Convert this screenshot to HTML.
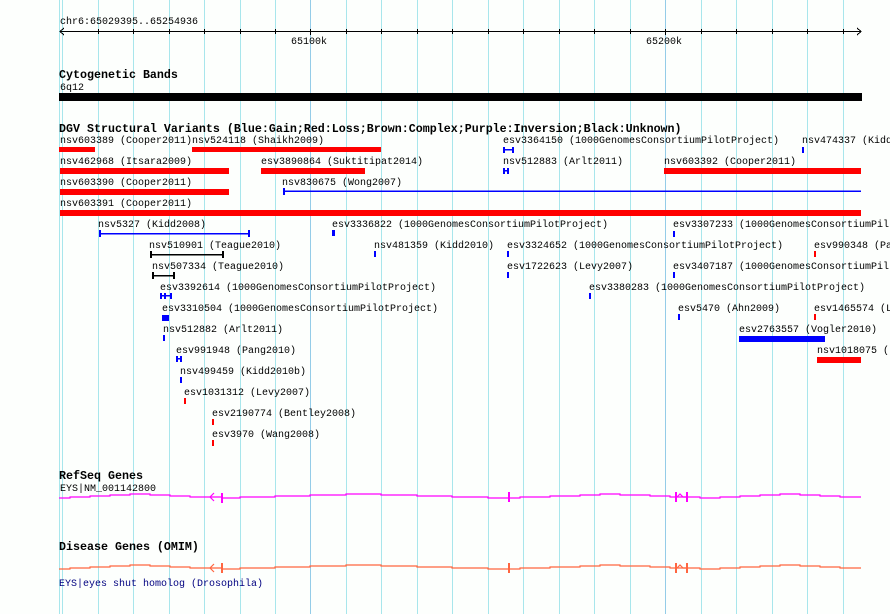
<!DOCTYPE html>
<html><head><meta charset="utf-8"><style>
html,body{margin:0;padding:0;background:#fdfffd;overflow:hidden;}
body{width:890px;height:614px;}
#w{position:absolute;left:0;top:0;width:890px;height:614px;overflow:hidden;font-family:"Liberation Mono",monospace;}
.t{position:absolute;font-size:10px;line-height:10px;white-space:nowrap;color:#000;margin-top:2px;}
.h{position:absolute;font-size:11.67px;line-height:12px;font-weight:bold;white-space:nowrap;color:#000;margin-top:1px;}
svg{position:absolute;left:0;top:0;}
</style></head><body><div id="w">
<svg width="890" height="614" xmlns="http://www.w3.org/2000/svg" shape-rendering="crispEdges">
<g stroke="#a8e6ec" stroke-width="1">
<line x1="59.5" y1="0" x2="59.5" y2="614"/><line x1="62.5" y1="0" x2="62.5" y2="614"/>
<line x1="98.5" y1="0" x2="98.5" y2="614"/><line x1="133.5" y1="0" x2="133.5" y2="614"/>
<line x1="169.5" y1="0" x2="169.5" y2="614"/><line x1="204.5" y1="0" x2="204.5" y2="614"/>
<line x1="240.5" y1="0" x2="240.5" y2="614"/><line x1="275.5" y1="0" x2="275.5" y2="614"/>
<line x1="346.5" y1="0" x2="346.5" y2="614"/><line x1="381.5" y1="0" x2="381.5" y2="614"/>
<line x1="417.5" y1="0" x2="417.5" y2="614"/><line x1="452.5" y1="0" x2="452.5" y2="614"/>
<line x1="488.5" y1="0" x2="488.5" y2="614"/><line x1="523.5" y1="0" x2="523.5" y2="614"/>
<line x1="559.5" y1="0" x2="559.5" y2="614"/><line x1="594.5" y1="0" x2="594.5" y2="614"/>
<line x1="630.5" y1="0" x2="630.5" y2="614"/><line x1="701.5" y1="0" x2="701.5" y2="614"/>
<line x1="736.5" y1="0" x2="736.5" y2="614"/><line x1="772.5" y1="0" x2="772.5" y2="614"/>
<line x1="807.5" y1="0" x2="807.5" y2="614"/><line x1="843.5" y1="0" x2="843.5" y2="614"/>
</g>
<g stroke="#94cce8"><line x1="310.5" y1="0" x2="310.5" y2="614"/><line x1="665.5" y1="0" x2="665.5" y2="614"/></g>
<g stroke="#000" stroke-width="1">
<line x1="60" y1="31.5" x2="861" y2="31.5"/>
<polyline points="64,28 60,31.5 64,35" fill="none"/>
<polyline points="857,28 861,31.5 857,35" fill="none"/>
<g>
<line x1="98.5" y1="29" x2="98.5" y2="34"/><line x1="133.5" y1="29" x2="133.5" y2="34"/><line x1="169.5" y1="29" x2="169.5" y2="34"/><line x1="204.5" y1="29" x2="204.5" y2="34"/><line x1="240.5" y1="29" x2="240.5" y2="34"/><line x1="275.5" y1="29" x2="275.5" y2="34"/><line x1="310.5" y1="29" x2="310.5" y2="35"/><line x1="346.5" y1="29" x2="346.5" y2="34"/><line x1="381.5" y1="29" x2="381.5" y2="34"/><line x1="417.5" y1="29" x2="417.5" y2="34"/><line x1="452.5" y1="29" x2="452.5" y2="34"/><line x1="488.5" y1="29" x2="488.5" y2="34"/><line x1="523.5" y1="29" x2="523.5" y2="34"/><line x1="559.5" y1="29" x2="559.5" y2="34"/><line x1="594.5" y1="29" x2="594.5" y2="34"/><line x1="630.5" y1="29" x2="630.5" y2="34"/><line x1="665.5" y1="29" x2="665.5" y2="35"/><line x1="701.5" y1="29" x2="701.5" y2="34"/><line x1="736.5" y1="29" x2="736.5" y2="34"/><line x1="772.5" y1="29" x2="772.5" y2="34"/><line x1="807.5" y1="29" x2="807.5" y2="34"/><line x1="843.5" y1="29" x2="843.5" y2="34"/>
</g></g>
<rect x="59" y="93" width="803" height="8" fill="#000"/>
<g fill="#ff0000">
<rect x="59" y="147" width="36" height="5"/><rect x="192" y="147" width="189" height="5"/>
<rect x="60" y="168" width="169" height="6"/><rect x="261" y="168" width="104" height="6"/><rect x="664" y="168" width="197" height="6"/>
<rect x="60" y="189" width="169" height="6"/>
<rect x="60" y="210" width="801" height="6"/>
<rect x="814" y="251" width="2" height="6"/>
<rect x="814" y="314" width="2" height="6"/>
<rect x="817" y="357" width="44" height="6"/>
<rect x="184" y="398" width="2" height="6"/>
<rect x="212" y="419" width="2" height="6"/>
<rect x="212" y="440" width="2" height="6"/>
</g>
<g fill="#0000ff">
<rect x="503" y="147" width="2" height="6"/><rect x="503" y="149" width="11" height="1.5"/><rect x="512" y="147" width="2" height="6"/>
<rect x="802" y="147" width="2" height="6"/>
<rect x="503" y="168" width="2" height="6"/><rect x="503" y="170" width="6" height="1.5"/><rect x="507" y="168" width="2" height="6"/>
<rect x="283" y="188" width="2" height="7"/><rect x="283" y="190.5" width="578" height="1.5"/>
<rect x="99" y="230" width="2" height="7"/><rect x="99" y="233" width="150" height="1.5"/><rect x="248" y="230" width="2" height="7"/>
<rect x="332" y="230" width="3" height="6"/>
<rect x="673" y="231" width="2" height="6"/>
<rect x="374" y="251" width="2" height="6"/>
<rect x="507" y="251" width="2" height="6"/>
<rect x="507" y="272" width="2" height="6"/>
<rect x="673" y="272" width="2" height="6"/>
<rect x="160" y="293" width="2" height="6"/><rect x="160" y="295" width="12" height="1.5"/><rect x="164" y="293" width="2" height="6"/><rect x="170" y="293" width="2" height="6"/>
<rect x="589" y="293" width="2" height="6"/>
<rect x="162" y="315" width="7" height="6"/>
<rect x="678" y="314" width="2" height="6"/>
<rect x="163" y="335" width="2" height="6"/>
<rect x="739" y="336" width="86" height="6"/>
<rect x="176" y="356" width="2" height="6"/><rect x="176" y="358" width="6" height="1.5"/><rect x="180" y="356" width="2" height="6"/>
<rect x="180" y="377" width="2" height="6"/>
</g>
<g fill="#000">
<rect x="150" y="251" width="2" height="7"/><rect x="150" y="254" width="73" height="1.5"/><rect x="222" y="251" width="2" height="7"/>
<rect x="152" y="272" width="2" height="7"/><rect x="152" y="275" width="22" height="1.5"/><rect x="173" y="272" width="2" height="7"/>
</g>
<g fill="none" stroke-width="1.2" shape-rendering="auto">
<polyline stroke="#ff00ff" points="59,498 70,498 70,497 90,497 90,496 110,496 110,495 130,495 130,494 150,494 150,495 170,495 170,496 190,496 190,497 222,497 222,498 240,498 240,497 275,497 275,496 310,496 310,495 346,495 346,494 381,494 381,495 417,495 417,496 452,496 452,497 488,497 488,498 520,498 520,497 550,497 550,496 580,496 580,495 600,495 600,494 620,494 620,495 650,495 650,496 670,496 670,497 700,497 700,498 720,498 720,497 740,497 740,496 760,496 760,495 780,495 780,494 800,494 800,495 820,495 820,496 840,496 840,497 861,497"/>
<polyline stroke="#ff6640" points="59,569 70,569 70,568 90,568 90,567 110,567 110,566 130,566 130,565 150,565 150,566 170,566 170,567 190,567 190,568 222,568 222,569 240,569 240,568 275,568 275,567 310,567 310,566 346,566 346,565 381,565 381,566 417,566 417,567 452,567 452,568 488,568 488,569 520,569 520,568 550,568 550,567 580,567 580,566 600,566 600,565 620,565 620,566 650,566 650,567 670,567 670,568 700,568 700,569 720,569 720,568 740,568 740,567 760,567 760,566 780,566 780,565 800,565 800,566 820,566 820,567 840,567 840,568 861,568"/>
<polyline stroke="#ff00ff" points="214,493 210,497 214,501"/>
<polyline stroke="#ff6640" points="214,564 210,568 214,572"/>
<polyline stroke="#ff00ff" points="677,497 680,494 683,497 686,497"/>
<polyline stroke="#ff6640" points="677,568 680,565 683,568 686,568"/>
</g>
<g fill="#ff00ff"><rect x="221" y="493" width="2" height="10"/><rect x="508" y="492" width="2" height="10"/><rect x="675" y="492" width="2" height="10"/><rect x="686" y="492" width="2" height="10"/></g>
<g fill="#ff6640"><rect x="221" y="563" width="2" height="10"/><rect x="508" y="563" width="2" height="10"/><rect x="675" y="563" width="2" height="10"/><rect x="686" y="563" width="2" height="10"/></g>
</svg>

<div class="t" style="left:60px;top:16px">chr6:65029395..65254936</div>
<div class="t" style="left:291px;top:36px">65100k</div>
<div class="t" style="left:646px;top:36px">65200k</div>
<div class="h" style="left:59px;top:68px">Cytogenetic Bands</div>
<div class="t" style="left:60px;top:82px">6q12</div>
<div class="h" style="left:59px;top:122px">DGV Structural Variants (Blue:Gain;Red:Loss;Brown:Complex;Purple:Inversion;Black:Unknown)</div>

<div class="t" style="left:60px;top:135px">nsv603389 (Cooper2011)</div>
<div class="t" style="left:192px;top:135px">nsv524118 (Shaikh2009)</div>
<div class="t" style="left:503px;top:135px">esv3364150 (1000GenomesConsortiumPilotProject)</div>
<div class="t" style="left:802px;top:135px">nsv474337 (Kidd</div>

<div class="t" style="left:60px;top:156px">nsv462968 (Itsara2009)</div>
<div class="t" style="left:261px;top:156px">esv3890864 (Suktitipat2014)</div>
<div class="t" style="left:503px;top:156px">nsv512883 (Arlt2011)</div>
<div class="t" style="left:664px;top:156px">nsv603392 (Cooper2011)</div>

<div class="t" style="left:60px;top:177px">nsv603390 (Cooper2011)</div>
<div class="t" style="left:282px;top:177px">nsv830675 (Wong2007)</div>

<div class="t" style="left:60px;top:198px">nsv603391 (Cooper2011)</div>

<div class="t" style="left:98px;top:219px">nsv5327 (Kidd2008)</div>
<div class="t" style="left:332px;top:219px">esv3336822 (1000GenomesConsortiumPilotProject)</div>
<div class="t" style="left:673px;top:219px">esv3307233 (1000GenomesConsortiumPil</div>

<div class="t" style="left:149px;top:240px">nsv510901 (Teague2010)</div>
<div class="t" style="left:374px;top:240px">nsv481359 (Kidd2010)</div>
<div class="t" style="left:507px;top:240px">esv3324652 (1000GenomesConsortiumPilotProject)</div>
<div class="t" style="left:814px;top:240px">esv990348 (Pa</div>

<div class="t" style="left:152px;top:261px">nsv507334 (Teague2010)</div>
<div class="t" style="left:507px;top:261px">esv1722623 (Levy2007)</div>
<div class="t" style="left:673px;top:261px">esv3407187 (1000GenomesConsortiumPil</div>

<div class="t" style="left:160px;top:282px">esv3392614 (1000GenomesConsortiumPilotProject)</div>
<div class="t" style="left:589px;top:282px">esv3380283 (1000GenomesConsortiumPilotProject)</div>

<div class="t" style="left:162px;top:303px">esv3310504 (1000GenomesConsortiumPilotProject)</div>
<div class="t" style="left:678px;top:303px">esv5470 (Ahn2009)</div>
<div class="t" style="left:814px;top:303px">esv1465574 (L</div>

<div class="t" style="left:163px;top:324px">nsv512882 (Arlt2011)</div>
<div class="t" style="left:739px;top:324px">esv2763557 (Vogler2010)</div>

<div class="t" style="left:176px;top:345px">esv991948 (Pang2010)</div>
<div class="t" style="left:817px;top:345px">nsv1018075 (</div>

<div class="t" style="left:180px;top:366px">nsv499459 (Kidd2010b)</div>
<div class="t" style="left:184px;top:387px">esv1031312 (Levy2007)</div>
<div class="t" style="left:212px;top:408px">esv2190774 (Bentley2008)</div>
<div class="t" style="left:212px;top:429px">esv3970 (Wang2008)</div>

<div class="h" style="left:59px;top:469px">RefSeq Genes</div>
<div class="t" style="left:60px;top:483px">EYS|NM_001142800</div>
<div class="h" style="left:59px;top:540px">Disease Genes (OMIM)</div>
<div class="t" style="left:59px;top:578px;color:#000080">EYS|eyes shut homolog (Drosophila)</div>
</div></body></html>
